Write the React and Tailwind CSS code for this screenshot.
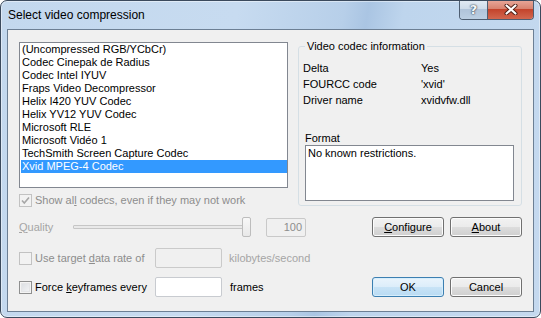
const CODECS = [
  '(Uncompressed RGB/YCbCr)',
  'Codec Cinepak de Radius',
  'Codec Intel IYUV',
  'Fraps Video Decompressor',
  'Helix I420 YUV Codec',
  'Helix YV12 YUV Codec',
  'Microsoft RLE',
  'Microsoft Vidéo 1',
  'TechSmith Screen Capture Codec',
  'Xvid MPEG-4 Codec',
]

const INFO = [
  ['Delta', 'Yes'],
  ['FOURCC code', "'xvid'"],
  ['Driver name', 'xvidvfw.dll'],
]

function Checkbox({ checked, disabled }) {
  return (
    <div
      className={
        'w-[13px] h-[13px] shrink-0 border flex items-center justify-center ' +
        (disabled
          ? 'border-[#c2c2c2] bg-[#f2f2f2]'
          : 'border-[#8e8f8f] bg-[linear-gradient(135deg,#d8dbe0,#f6f7f8)] shadow-[inset_0_0_0_1px_#f4f4f4,inset_0_0_0_2px_#e4e5e7]')
      }
    >
      {checked && (
        <svg width="11" height="11" viewBox="0 0 11 11">
          <path d="M2 5.5 L4.3 8 L9 2.5" fill="none" stroke="#a7a7a7" strokeWidth="1.6" />
        </svg>
      )}
    </div>
  )
}

function Button({ children, primary }) {
  return (
    <div
      className={
        'w-[72px] h-[20px] rounded-[3px] border flex items-center justify-center text-black ' +
        (primary
          ? 'border-[#3c7fb1] bg-[linear-gradient(to_bottom,#e9f4fc_0%,#dcedfa_50%,#c8e3f6_50%,#b9dbf3_100%)] shadow-[inset_0_0_0_1px_#d7eefc]'
          : 'border-[#707070] bg-[linear-gradient(to_bottom,#f2f2f2_0%,#ebebeb_50%,#dddddd_50%,#cfcfcf_100%)] shadow-[inset_0_0_0_1px_#fcfcfc]')
      }
    >
      {children}
    </div>
  )
}

export default function App() {
  return (
    <div className="w-[541px] h-[318px] bg-white font-['Liberation_Sans',Arial,sans-serif] text-[11px] leading-[13px] text-black">
      <div className="w-full h-full flex flex-col rounded-[7px] border border-[#3b4a5d] overflow-hidden bg-[linear-gradient(100deg,#c3d8ee_0%,#c7dbf0_40%,#b7cfe9_58%,#aac5e3_62%,#bed5ed_68%,#c5d9ef_100%)] shadow-[inset_0_0_0_1px_rgba(255,255,255,0.45)]">
        {/* Title bar */}
        <div className="h-[28px] flex items-start shrink-0">
          <span className="pl-[7px] pt-[6px] text-[12px] leading-[16px] text-black">Select video compression</span>
          <div className="ml-auto mr-[6px] -mt-px flex h-[20px] rounded-b-[4px] border border-t-0 border-[#4e5e72] overflow-hidden">
            <div className="w-[28px] h-full flex items-center justify-center border-r border-[#4e5e72] bg-[linear-gradient(to_bottom,#e3ebf4_0%,#cfdcea_45%,#b1c4da_50%,#bccfe3_100%)]">
              <span className="font-['DejaVu_Sans',sans-serif] font-bold text-[13px] leading-[13px] text-[#f4f6f8] [text-shadow:0_0_1px_#27384c,0_0_2px_#27384c]">?</span>
            </div>
            <div className="w-[45px] h-full flex items-center justify-center bg-[linear-gradient(to_bottom,#e9a99b_0%,#d88370_45%,#c4442c_50%,#d2674f_100%)]">
              <svg width="14" height="11" viewBox="0 0 14 11">
                <path d="M2.5 1.5 L11.5 9.5 M11.5 1.5 L2.5 9.5" stroke="#4a1b12" strokeWidth="4" strokeLinecap="round" />
                <path d="M2.5 1.5 L11.5 9.5 M11.5 1.5 L2.5 9.5" stroke="#ffffff" strokeWidth="2.2" strokeLinecap="round" />
              </svg>
            </div>
          </div>
        </div>

        {/* Client area */}
        <div className="mx-[6px] h-[283px] shrink-0 border border-[#6c7f94] bg-[#f0f0f0] flex flex-col">
          {/* Row 1 */}
          <div className="flex mt-[12px] pl-[11px]">
            <div className="w-[269px] flex flex-col">
              <div className="h-[146px] border border-[#828790] bg-white pl-px">
                {CODECS.map((c, i) => (
                  <div
                    key={c}
                    className={
                      'h-[13px] pl-px whitespace-nowrap ' +
                      (i === CODECS.length - 1 ? 'bg-[#3399ff] text-white' : '')
                    }
                  >
                    {c}
                  </div>
                ))}
              </div>
              <div className="mt-[6px] h-[13px] flex items-center">
                <Checkbox checked disabled />
                <span className="ml-[3px] text-[#8d8d8d] whitespace-nowrap">
                  Show al<u>l</u> codecs, even if they may not work
                </span>
              </div>
            </div>

            <fieldset className="ml-[10px] -mt-[2px] w-[224px] h-[166px] border border-[#d5dfe5] rounded-[3px] px-[4px]">
              <legend className="ml-[2px] px-[2px] leading-[13px]">Video codec information</legend>
              <div className="mt-[7px] grid grid-cols-[118px_1fr] leading-[16px]">
                {INFO.map(([k, v]) => (
                  <div key={k} className="contents">
                    <span>{k}</span>
                    <span>{v}</span>
                  </div>
                ))}
              </div>
              <div className="mt-[24px] ml-[2px] leading-[13px]">Format</div>
              <div className="ml-[2px] w-[209px] h-[56px] border border-[#828790] bg-white pt-px px-[2px]">
                No known restrictions.
              </div>
            </fieldset>
          </div>

          {/* Row 2: quality */}
          <div className="flex items-center h-[20px] mt-[10px] pl-[11px]">
            <span className="w-[54px] text-[#a5a5a5]">
              <u>Q</u>uality
            </span>
            <div className="relative w-[178px] h-[20px] flex items-center">
              <div className="w-[172px] h-[4px] border border-[#c6c6c6] bg-[#e9e9e9] rounded-[1px]" />
              <div className="absolute left-[169px] top-0 w-[9px] h-[20px] rounded-[2px] border border-[#bdbdbd] bg-[linear-gradient(to_bottom,#f8f8f8,#e8e8e8)]" />
            </div>
            <div className="ml-[15px] w-[40px] h-[19px] border border-[#c9c9c9] rounded-[2px] flex items-center justify-end pr-[3px] text-[#8d8d8d]">
              100
            </div>
            <div className="ml-[66px]">
              <Button>
                <u>C</u>onfigure
              </Button>
            </div>
            <div className="ml-[6px]">
              <Button>
                <u>A</u>bout
              </Button>
            </div>
          </div>

          {/* Row 3: data rate */}
          <div className="flex items-center h-[20px] mt-[11px] pl-[11px]">
            <div className="w-[136px] flex items-center">
              <Checkbox disabled />
              <span className="ml-[3px] text-[#8d8d8d] whitespace-nowrap">
                Use target <u>d</u>ata rate of
              </span>
            </div>
            <div className="w-[67px] h-[20px] border border-[#cacaca] rounded-[2px] bg-[#f0f0f0]" />
            <span className="ml-[7px] text-[#a5a5a5]">kilobytes/second</span>
          </div>

          {/* Row 4: keyframes */}
          <div className="flex items-center h-[20px] mt-[9px] pl-[11px]">
            <div className="w-[136px] flex items-center">
              <Checkbox />
              <span className="ml-[3px] whitespace-nowrap">
                Force <u>k</u>eyframes every
              </span>
            </div>
            <div className="w-[67px] h-[20px] border border-[#c8cbd0] rounded-[2px] bg-white" />
            <span className="ml-[8px] w-[142px]">frames</span>
            <Button primary>OK</Button>
            <div className="ml-[6px]">
              <Button>Cancel</Button>
            </div>
          </div>
        </div>
      </div>
    </div>
  )
}
